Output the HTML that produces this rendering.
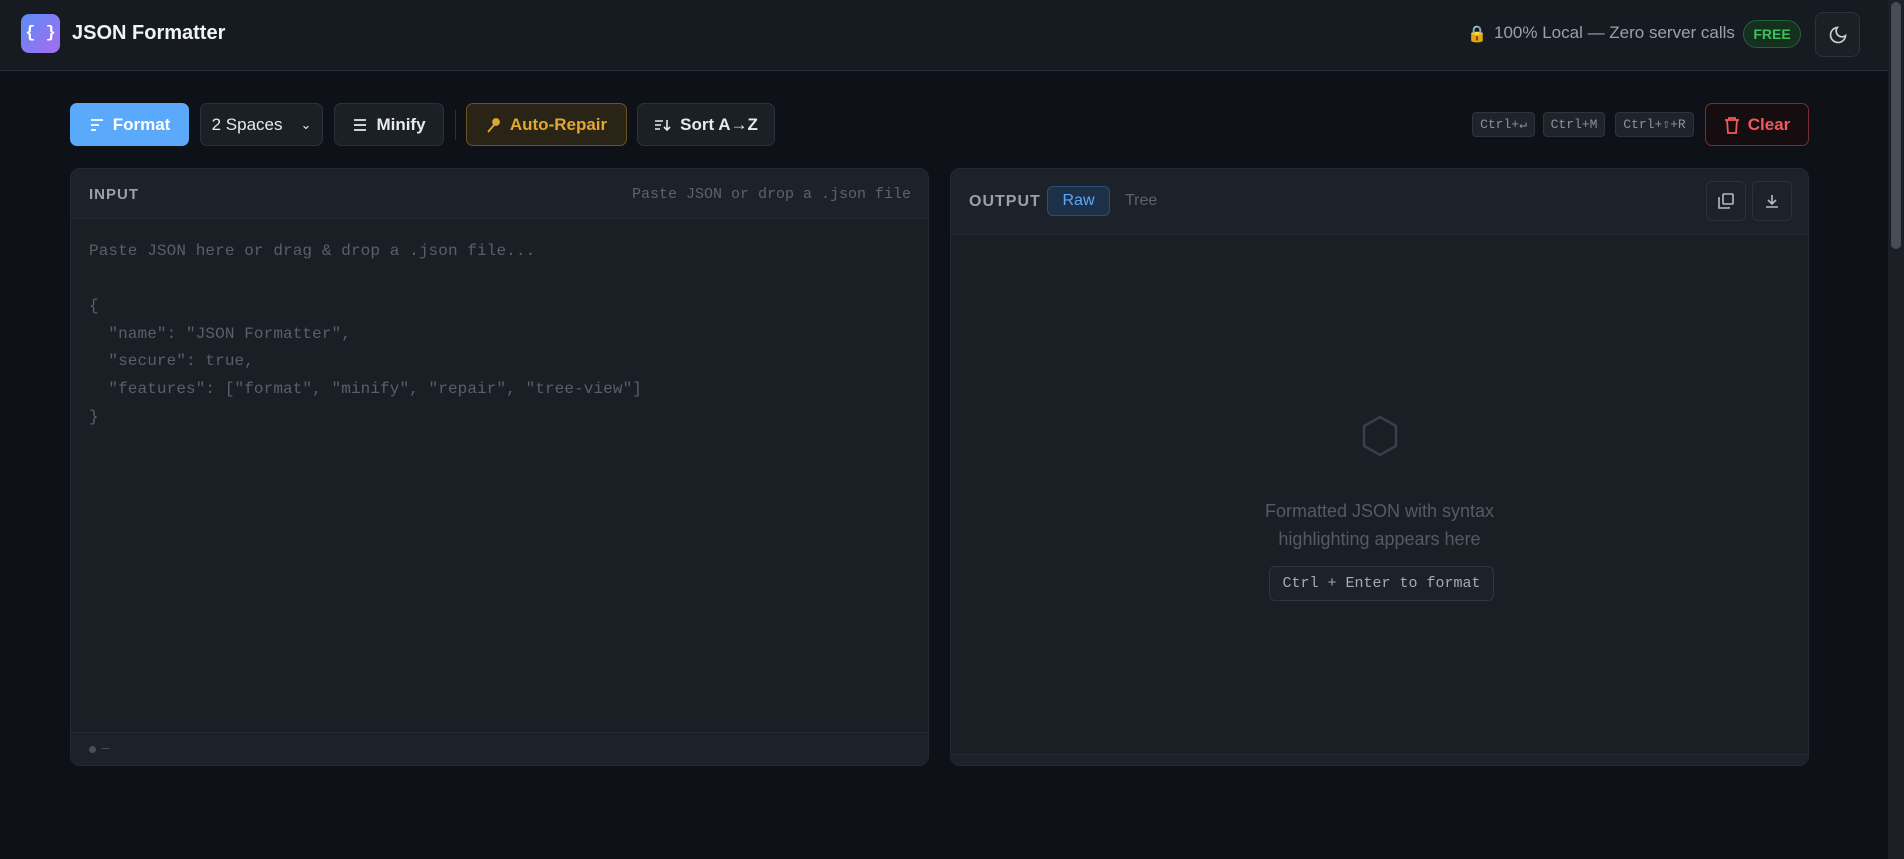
<!DOCTYPE html>
<html><head><meta charset="utf-8"><style>
*{box-sizing:border-box;margin:0;padding:0}
body{width:1904px;height:859px;background:#0e1117;font-family:"Liberation Sans",sans-serif;color:#e6e8eb;position:relative;overflow:hidden}
.abs{position:absolute}
.hdr{left:0;top:0;width:1888px;height:71px;background:#161a21;border-bottom:1px solid #262b33}
.logo{left:21px;top:14px;width:39px;height:39px;border-radius:8px;background:linear-gradient(135deg,#5b8cf5,#a66cf0);color:#fff;font:bold 17px "Liberation Mono",monospace;display:flex;align-items:center;justify-content:center}
.btn{height:43px;top:103px;border-radius:7px;border:1px solid #2c323b;background:#1b1f26;display:flex;align-items:center;justify-content:center;font-size:17px;font-weight:bold;color:#e8eaed;gap:8px}
.kbd{top:112px;height:25px;border-radius:4px;background:#1f242b;border:1px solid #2e343c;color:#8b929b;font:13px "Liberation Mono",monospace;display:flex;align-items:center;justify-content:center}
.panel{top:168px;width:859px;height:598px;background:#1a1e25;border:1px solid #252a32;border-radius:10px;overflow:hidden}
.mono{font-family:"Liberation Mono",monospace}
</style></head><body>
<div class="abs hdr"></div>
<div class="abs logo">{ }</div>
<div class="abs" style="left:72px;top:22px;font-size:20px;font-weight:bold;color:#f1f3f5">JSON Formatter</div>
<div class="abs" style="left:1467px;top:24px;font-size:16px">🔒</div>
<div class="abs" style="left:1494px;top:23px;font-size:17px;color:#9aa1aa">100% Local — Zero server calls</div>
<div class="abs" style="left:1743px;top:20px;width:58px;height:28px;border-radius:14px;background:#15301f;border:1px solid #23613a;color:#3fbf5e;font-size:14px;font-weight:bold;display:flex;align-items:center;justify-content:center">FREE</div>
<div class="abs" style="left:1815px;top:12px;width:45px;height:45px;border-radius:8px;border:1px solid #2c323b;background:#1b1f26;display:flex;align-items:center;justify-content:center">
<svg width="20" height="20" viewBox="0 0 24 24" fill="none" stroke="#c9ced4" stroke-width="2"><path d="M21 12.8A9 9 0 1 1 11.2 3a7 7 0 0 0 9.8 9.8z"/></svg></div>
<div class="abs" style="left:1888px;top:0;width:16px;height:859px;background:#1c2026"></div>
<div class="abs" style="left:1891px;top:2px;width:10px;height:247px;border-radius:5px;background:#474d55"></div>

<div class="abs btn" style="left:70px;width:119px;background:#5aa9fb;border-color:#5aa9fb;color:#fff">
<svg width="16" height="16" viewBox="0 0 16 16" stroke="#fff" stroke-width="1.8"><path d="M2 3h12M2 8h8M2 13h5"/></svg>Format</div>
<div class="abs btn" style="left:200px;width:123px;font-weight:normal;gap:18px">2 Spaces <span style="font-size:13px">⌄</span></div>
<div class="abs btn" style="left:334px;width:110px">
<svg width="16" height="16" viewBox="0 0 16 16" stroke="#e8eaed" stroke-width="1.8"><path d="M2 3h12M2 8h12M2 13h12"/></svg>Minify</div>
<div class="abs" style="left:455px;top:110px;width:1px;height:30px;background:#2c323b"></div>
<div class="abs btn" style="left:466px;width:161px;background:#2a2416;border-color:#6b5421;color:#e0a830">
<svg width="16" height="16" viewBox="0 0 16 16" stroke="#e0a830" stroke-width="1.8" fill="#e0a830"><path d="M2 15l6-7"/><circle cx="10" cy="5" r="3"/></svg>Auto-Repair</div>
<div class="abs btn" style="left:637px;width:138px">
<svg width="18" height="16" viewBox="0 0 18 16" stroke="#e8eaed" stroke-width="1.6" fill="none"><path d="M1 4h8M1 8h6M1 12h5M13 3v10M10 10l3 3 3-3"/></svg>Sort A→Z</div>

<div class="abs kbd" style="left:1472px;width:63px">Ctrl+↵</div>
<div class="abs kbd" style="left:1543px;width:62px">Ctrl+M</div>
<div class="abs kbd" style="left:1615px;width:79px">Ctrl+⇧+R</div>
<div class="abs btn" style="left:1705px;width:104px;background:#150d10;border-color:#7a2d31;color:#f0585c">
<svg width="16" height="18" viewBox="0 0 16 18" stroke="#f0585c" stroke-width="1.8" fill="none"><path d="M1 4h14M5 4V2h6v2M3 4l1 13h8l1-13"/></svg>Clear</div>

<div class="abs panel" style="left:70px">
<div style="height:50px;background:#1d2129;border-bottom:1px solid #252a32;position:relative">
<div class="abs" style="left:18px;top:17px;font-size:15px;font-weight:bold;color:#9aa1aa;letter-spacing:1px">INPUT</div>
<div class="abs mono" style="right:17px;top:17px;font-size:15px;color:#5c636c">Paste JSON or drop a .json file</div></div>
<pre class="abs mono" style="left:18px;top:69px;font-size:16px;line-height:27.6px;color:#5a6068;letter-spacing:0.1px">Paste JSON here or drag &amp; drop a .json file...

{
  "name": "JSON Formatter",
  "secure": true,
  "features": ["format", "minify", "repair", "tree-view"]
}</pre>
<div class="abs" style="left:0;top:563px;width:100%;height:35px;background:#1d2129;border-top:1px solid #252a32">
<div class="abs" style="left:18px;top:13px;width:7px;height:7px;border-radius:4px;background:#4a5058"></div>
<div class="abs" style="left:31px;top:6px;color:#4a5058;font-size:14px">–</div></div>
</div>

<div class="abs panel" style="left:950px">
<div style="height:66px;background:#1d2129;border-bottom:1px solid #252a32;position:relative">
<div class="abs" style="left:18px;top:24px;font-size:16px;font-weight:bold;color:#9aa1aa;letter-spacing:1px">OUTPUT</div>
<div class="abs" style="left:96px;top:17px;width:63px;height:30px;border-radius:6px;background:#1c3048;border:1px solid #2b4f78;color:#5aa9fb;font-size:16px;display:flex;align-items:center;justify-content:center">Raw</div>
<div class="abs" style="left:174px;top:23px;color:#5c636c;font-size:16px">Tree</div>
<div class="abs" style="left:755px;top:12px;width:40px;height:40px;border-radius:6px;border:1px solid #2c323b;display:flex;align-items:center;justify-content:center">
<svg width="18" height="18" viewBox="0 0 18 18" stroke="#b5bbc2" stroke-width="1.6" fill="none"><rect x="6" y="2" width="10" height="10" rx="1"/><path d="M3 6H2v10h10v-1"/></svg></div>
<div class="abs" style="left:801px;top:12px;width:40px;height:40px;border-radius:6px;border:1px solid #2c323b;display:flex;align-items:center;justify-content:center">
<svg width="16" height="16" viewBox="0 0 16 16" stroke="#b5bbc2" stroke-width="1.6" fill="none"><path d="M8 2v9M4 7l4 4 4-4M2 14h12"/></svg></div>
</div>
<svg class="abs" style="left:410px;top:246px" width="38" height="42" viewBox="0 0 38 42" fill="none" stroke="#3a3f47" stroke-width="2.5"><path d="M19 2l16 9v20l-16 9-16-9V11z"/></svg>
<div class="abs" style="left:0;top:328px;width:100%;text-align:center;font-size:18px;line-height:28px;color:#555b63">Formatted JSON with syntax<br>highlighting appears here</div>
<div class="abs mono" style="left:318px;top:397px;width:225px;height:35px;border:1px solid #30363e;border-radius:6px;background:#1d2129;color:#a5abb2;font-size:15px;display:flex;align-items:center;justify-content:center">Ctrl + Enter to format</div>
<div class="abs" style="left:0;top:585px;width:100%;height:13px;background:#1d2129;border-top:1px solid #252a32"></div>
</div>
</body></html>
